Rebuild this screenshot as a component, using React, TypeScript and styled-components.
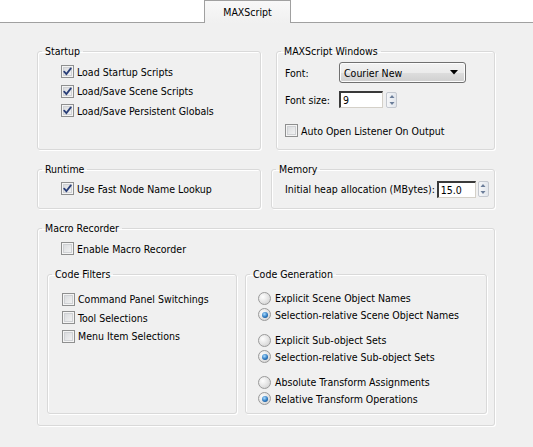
import * as React from 'react';
import styled, { createGlobalStyle } from 'styled-components';

const GlobalStyle = createGlobalStyle`
  * { box-sizing: border-box; }
  html, body {
    margin: 0;
    padding: 0;
    background: #f0f0f0;
  }
  body {
    font-family: "DejaVu Sans Condensed", "Liberation Sans", Arial, sans-serif;
    font-size: 10.5px;
    color: #000;
  }
`;

type Option = { label: string; checked?: boolean };

const startupOptions: Option[] = [
  { label: 'Load Startup Scripts', checked: true },
  { label: 'Load/Save Scene Scripts', checked: true },
  { label: 'Load/Save Persistent Globals', checked: true },
];

const filterOptions: Option[] = [
  { label: 'Command Panel Switchings' },
  { label: 'Tool Selections' },
  { label: 'Menu Item Selections' },
];

const generationPairs: Option[][] = [
  [
    { label: 'Explicit Scene Object Names' },
    { label: 'Selection-relative Scene Object Names', checked: true },
  ],
  [
    { label: 'Explicit Sub-object Sets' },
    { label: 'Selection-relative Sub-object Sets', checked: true },
  ],
  [
    { label: 'Absolute Transform Assignments' },
    { label: 'Relative Transform Operations', checked: true },
  ],
];

const CheckBox: React.FC<Option & { height?: number }> = ({ label, checked, height }) => (
  <OptionRow $height={height ?? 19}>
    <Box>
      {checked && (
        <svg width="9" height="9" viewBox="0 0 9 9">
          <path d="M1.2 4.6 L3.4 7 L7.8 1.4" fill="none" stroke="#2a3f78" strokeWidth="1.8" strokeLinecap="round" />
        </svg>
      )}
    </Box>
    <span>{label}</span>
  </OptionRow>
);

const Radio: React.FC<Option> = ({ label, checked }) => (
  <OptionRow $height={16.5}>
    <Circle>{checked && <Dot />}</Circle>
    <span>{label}</span>
  </OptionRow>
);

const Spinner: React.FC = () => (
  <Spin>
    <svg width="8" height="14" viewBox="0 0 8 14">
      <path d="M4 2 L6.5 5 L1.5 5 Z" fill="#6b7d99" />
      <path d="M4 12 L6.5 9 L1.5 9 Z" fill="#6b7d99" />
    </svg>
  </Spin>
);

export default function App() {
  return (
    <Page>
      <GlobalStyle />
      <TabStrip>
        <Tab>MAXScript</Tab>
      </TabStrip>
      <Body>
        <Row>
          <Group $width={224} $height={105}>
            <Legend>Startup</Legend>
            <Options $left={23} $top={4}>
              {startupOptions.map((o) => (
                <CheckBox key={o.label} {...o} height={19.5} />
              ))}
            </Options>
          </Group>
          <Group $width={219} $height={105} $offset={15}>
            <Legend>MAXScript Windows</Legend>
            <FieldGrid>
              <span>Font:</span>
              <Select>
                <span>Courier New</span>
                <svg width="8" height="5" viewBox="0 0 8 5">
                  <path d="M0 0 H8 L4 4.5 Z" fill="#000" />
                </svg>
              </Select>
              <span>Font size:</span>
              <InputRow>
                <Input $width={44}>9</Input>
                <Spinner />
              </InputRow>
            </FieldGrid>
            <Options $left={8} $top={13}>
              <CheckBox label="Auto Open Listener On Output" />
            </Options>
          </Group>
        </Row>
        <Row>
          <Group $width={224} $height={46}>
            <Legend>Runtime</Legend>
            <Options $left={23} $top={3}>
              <CheckBox label="Use Fast Node Name Lookup" checked />
            </Options>
          </Group>
          <Group $width={224} $height={46} $offset={10}>
            <Legend>Memory</Legend>
            <HeapRow>
              <span>Initial heap allocation (MBytes):</span>
              <Input $width={39}>15.0</Input>
              <Spinner />
            </HeapRow>
          </Group>
        </Row>
        <Group $width={458} $height={204}>
          <Legend>Macro Recorder</Legend>
          <Options $left={23} $top={4}>
            <CheckBox label="Enable Macro Recorder" />
          </Options>
          <SubRow>
            <Group $width={190} $height={146}>
              <Legend>Code Filters</Legend>
              <Options $left={14} $top={9}>
                {filterOptions.map((o) => (
                  <CheckBox key={o.label} {...o} height={18.5} />
                ))}
              </Options>
            </Group>
            <Group $width={242} $height={146} $offset={8}>
              <Legend>Code Generation</Legend>
              <RadioList>
                {generationPairs.map((pair, i) => (
                  <div key={i}>
                    {pair.map((o) => (
                      <Radio key={o.label} {...o} />
                    ))}
                  </div>
                ))}
              </RadioList>
            </Group>
          </SubRow>
        </Group>
      </Body>
    </Page>
  );
}

const Page = styled.div`
  width: 533px;
  height: 447px;
  background: #f0f0f0;
  overflow: hidden;
`;

const TabStrip = styled.div`
  height: 23px;
  background: #fff;
  border-bottom: 1px solid #a0a0a0;
  padding-left: 204px;
  display: flex;
  align-items: flex-end;
`;

const Tab = styled.div`
  width: 87px;
  height: 23px;
  margin-bottom: -1px;
  border: 1px solid #a0a0a0;
  border-bottom: none;
  background: linear-gradient(#f8f8f8, #f0f0f0);
  display: flex;
  align-items: center;
  justify-content: center;
  padding-bottom: 1px;
`;

const Body = styled.div`
  padding: 22px 0 0 37px;
  display: flex;
  flex-direction: column;
  gap: 13px;
`;

const Row = styled.div`
  display: flex;
`;

const Group = styled.fieldset<{ $width: number; $height: number; $offset?: number }>`
  width: ${(p) => p.$width}px;
  height: ${(p) => p.$height}px;
  margin: 0 0 0 ${(p) => p.$offset ?? 0}px;
  padding: 0;
  min-width: 0;
  border: 1px solid #d9d9d9;
  border-radius: 3px;
  box-shadow: inset 1px 1px 0 #fff, 1px 1px 0 #fff;
`;

const Legend = styled.legend`
  margin-left: 4px;
  padding: 0 3px;
  line-height: 13px;
`;

const Options = styled.div<{ $left: number; $top: number }>`
  padding: ${(p) => p.$top}px 0 0 ${(p) => p.$left}px;
`;

const OptionRow = styled.div<{ $height: number }>`
  height: ${(p) => p.$height}px;
  display: flex;
  align-items: center;
  gap: 3px;
  white-space: nowrap;
`;

const Box = styled.span`
  width: 13px;
  height: 13px;
  flex: none;
  border: 1px solid #8e8f8f;
  background: linear-gradient(135deg, #d4d6d9, #f7f7f7);
  box-shadow: inset 0 0 0 1px #f4f4f4, inset 0 0 0 2px #cfd1d4;
  display: flex;
  align-items: center;
  justify-content: center;
`;

const Circle = styled.span`
  width: 13px;
  height: 13px;
  flex: none;
  border-radius: 50%;
  border: 1px solid #9a9a9a;
  background: radial-gradient(circle at 35% 35%, #fefefe, #e0e0e0 60%, #c8c8c8);
  display: flex;
  align-items: center;
  justify-content: center;
  margin-left: -1px;
  margin-right: 1px;
`;

const Dot = styled.span`
  width: 6px;
  height: 6px;
  border-radius: 50%;
  background: radial-gradient(circle at 40% 35%, #a9dcff, #2d79c0 55%, #0f3f76);
`;

const FieldGrid = styled.div`
  display: grid;
  grid-template-columns: 54px auto;
  row-gap: 8px;
  align-items: center;
  padding: 4px 0 0 8px;
`;

const Select = styled.div`
  width: 127px;
  height: 21px;
  border: 1px solid #707070;
  border-radius: 3px;
  background: linear-gradient(#f2f2f2, #ebebeb 50%, #dddddd 51%, #cfcfcf);
  box-shadow: inset 0 0 0 1px #fcfcfc;
  display: flex;
  align-items: center;
  justify-content: space-between;
  padding: 0 7px 0 4px;
`;

const InputRow = styled.div`
  display: flex;
  align-items: center;
  gap: 3px;
`;

const Input = styled.div<{ $width: number }>`
  width: ${(p) => p.$width}px;
  height: 17px;
  background: #fff;
  border-top: 2px solid #3a3a3a;
  border-left: 2px solid #3a3a3a;
  border-right: 1px solid #d4d0c8;
  border-bottom: 1px solid #d4d0c8;
  padding-left: 2px;
  line-height: 14px;
`;

const Spin = styled.span`
  width: 11px;
  height: 16px;
  border: 1px solid #c4c8cf;
  border-radius: 2px;
  background: linear-gradient(90deg, #f6f7f9, #e2e6ec);
  display: flex;
  align-items: center;
  justify-content: center;
`;

const HeapRow = styled.div`
  display: flex;
  align-items: center;
  padding: 2px 0 0 13px;
  height: 24px;
  gap: 2px;
  white-space: nowrap;
`;

const SubRow = styled.div`
  display: flex;
  padding: 10px 0 0 9px;
`;

const RadioList = styled.div`
  display: flex;
  flex-direction: column;
  gap: 9px;
  padding: 9px 0 0 13px;
`;
